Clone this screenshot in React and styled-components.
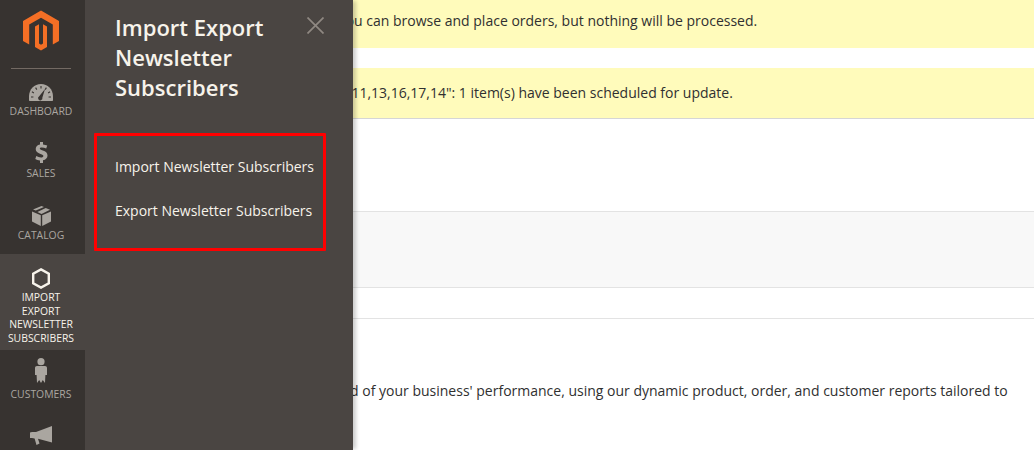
import React from 'react';
import styled, { createGlobalStyle } from 'styled-components';

const Global = createGlobalStyle`
  html, body { margin: 0; padding: 0; height: 450px; overflow: hidden; background: #fff; }
  body { font-family: "Open Sans", "Liberation Sans", sans-serif; color: #303030; }
  * { box-sizing: border-box; }
`;

const Page = styled.div`
  position: relative;
  width: 1034px;
  height: 450px;
  overflow: hidden;
  display: flex;
`;

const Nav = styled.nav`
  flex: 0 0 85px;
  height: 450px;
  background: #373330;
  display: flex;
  flex-direction: column;
  align-items: stretch;
  overflow: hidden;
  position: relative;
  z-index: 3;
`;

const LogoWrap = styled.div`
  flex: 0 0 69px;
  margin: 0 14px 0 11px;
  border-bottom: 1px solid #736a63;
  display: flex;
  justify-content: center;
  padding: 10px 1px 0 0;
`;

const NavItem = styled.div`
  flex: 0 0 auto;
  height: ${p => p.$h}px;
  background: ${p => (p.$active ? '#4a4542' : 'transparent')};
  color: ${p => (p.$active ? '#f7f3eb' : '#aaa6a0')};
  display: flex;
  flex-direction: column;
  align-items: center;
  justify-content: flex-start;
  padding: ${p => p.$pt}px 3px 0 0;
  text-align: center;
`;

const IconBox = styled.div`
  height: ${p => p.$h || 26}px;
  display: flex;
  align-items: center;
  justify-content: center;
`;

const NavLabel = styled.span`
  font-size: 10.4px;
  line-height: 13.5px;
  text-transform: uppercase;
  display: block;
`;

const Panel = styled.aside`
  position: absolute;
  left: 85px;
  top: 0;
  width: 268px;
  height: 450px;
  background: #4a4542;
  box-shadow: 4px 0 4px -1px rgba(0, 0, 0, 0.2);
  z-index: 2;
`;

const PanelTitle = styled.h2`
  margin: 0;
  padding: 12px 0 0 30px;
  width: 200px;
  font-size: 22px;
  line-height: 30px;
  font-weight: 600;
  color: #f7f3eb;
`;

const Close = styled.button`
  position: absolute;
  left: 222px;
  top: 17px;
  width: 17px;
  height: 17px;
  padding: 0;
  border: 0;
  background: none;
  display: flex;
`;

const Highlight = styled.ul`
  list-style: none;
  margin: 31px 0 0 9px;
  padding: 9px 0 0 20px;
  width: 232px;
  height: 118px;
  border: 3px solid #f00;
  border-radius: 1px;
`;

const PanelLink = styled.li`
  font-size: 14px;
  line-height: 44px;
  height: 44px;
  color: #f7f3eb;
  white-space: nowrap;
  margin-left: -2px;
`;

const Main = styled.main`
  flex: 1 1 auto;
  min-width: 0;
  display: flex;
  flex-direction: column;
  font-size: 14px;
`;

const Message = styled.div`
  height: ${p => p.$h}px;
  background: #fffbbb;
  padding-left: ${p => p.$indent}px;
  line-height: ${p => p.$lh}px;
  white-space: nowrap;
  flex: 0 0 auto;
  margin-bottom: ${p => p.$mb || 0}px;
  border-bottom: ${p => (p.$line ? '1px solid #d6d6d6' : '0')};
`;

const Spacer = styled.div`
  flex: 0 0 ${p => p.$h}px;
`;

const GreySection = styled.div`
  flex: 0 0 77px;
  background: #f8f8f8;
  border-top: 1px solid #e3e3e3;
  border-bottom: 1px solid #e3e3e3;
`;

const Rule = styled.div`
  flex: 0 0 1px;
  background: #e3e3e3;
`;

const Copy = styled.p`
  margin: 62px 0 0 0;
  padding-left: 29px;
  line-height: 20px;
  white-space: nowrap;
`;

const Logo = () => (
  <svg width="36" height="41" viewBox="0 0 36 41">
    <path fill="#f46f25" d="M18 0.500 36 11V31L29.800 34.500V14.500L18 7.800 6.200 14.500V34.500L0 31V11Z" />
    <path fill="#f46f25" d="M12 16.500 16 14.200V33.500L18 34.800 20 33.500V14.200L24 16.500V37L18 40.500 12 37Z" />
  </svg>
);

const Gauge = () => (
  <svg width="24" height="17" viewBox="0 0 24 17">
    <path fill="#aaa6a0" fillRule="evenodd" d="M12 0C5.4 0 0 5.4 0 12.2V16c0 .6.4 1 1 1h22c.6 0 1-.4 1-1v-3.800C24 5.400 18.600 0 12 0Z" />
    <path stroke="#373330" strokeWidth="1.100" d="M12 2v2.400M6.600 3.600l1.200 2M2.900 7.800l2 1.100M2 13h2.400M21.100 7.800l-2 1.100M22 13h-2.400M17.400 3.600l-1.200 2" />
    <path fill="#373330" d="M16 5 13.400 13.600a2.200 2.200 0 1 1-3.200-1.400Z" />
  </svg>
);

const Dollar = () => (
  <svg width="13" height="21" viewBox="0 0 13 21">
    <path fill="#aaa6a0" d="M5 0h3v2.400c1.700.2 3 .6 4.200 1.200l-1 2.900C9.800 5.800 8.300 5.400 6.800 5.400c-1.400 0-2 .5-2 1.200 0 .8.900 1.200 3 2 2.900 1 4.700 2.300 4.700 4.900 0 2.400-1.700 4.300-4.500 4.800V21H5v-2.500c-1.800-.2-3.500-.7-4.700-1.400l1-3c1.400.8 3.100 1.400 4.700 1.400 1.500 0 2.400-.6 2.400-1.500s-.8-1.400-2.900-2.100C2.600 10.900.7 9.600.7 7c0-2.300 1.600-4 4.300-4.500Z" />
  </svg>
);

const Box = () => (
  <svg width="19" height="20" viewBox="0 0 19 20">
    <path fill="#aaa6a0" d="M0 5.500 8.800 9.300V20L0 15.600ZM19 5.500 10.200 9.300V20L19 15.600Z" />
    <path fill="#aaa6a0" d="M9.500 0 12 1.100 3.800 4.500 1 3.400ZM13.700 1.900 18 3.700 9.500 7.900 5.400 6Z" />
  </svg>
);

const Hexagon = () => (
  <svg width="18" height="21" viewBox="0 0 18 21">
    <path fill="none" stroke="#f7f3eb" strokeWidth="2.400" d="M9 1.400 16.800 5.800V15.200L9 19.600 1.200 15.200V5.800Z" />
  </svg>
);

const Person = () => (
  <svg width="12" height="25" viewBox="0 0 12 25">
    <circle cx="6" cy="3.700" r="3.600" fill="#aaa6a0" />
    <path fill="#aaa6a0" d="M2 8h8c1.200 0 2 .8 2 2v7h-1.600L10 25l-2.200-3L6 25l-1.800-3L2 25l-.4-8H0v-7c0-1.200.8-2 2-2Z" />
  </svg>
);

const Megaphone = () => (
  <svg width="22" height="20" viewBox="0 0 22 20">
    <path fill="#aaa6a0" d="M22 0V16.500L8 12.800 9.500 17.500 6.500 19 4.600 12.400 2 12H0V6.500L2 6H6Z" />
  </svg>
);

const X = () => (
  <svg width="17" height="17" viewBox="0 0 17 17">
    <path stroke="#8f8882" strokeWidth="1.700" fill="none" d="M.5.500 16.500 16.500M16.500.5.500 16.500" />
  </svg>
);

export default function App() {
  return (
    <Page>
      <Global />
      <Nav>
        <LogoWrap><Logo /></LogoWrap>
        <NavItem $h={61} $pt={10}>
          <IconBox><Gauge /></IconBox>
          <NavLabel>Dashboard</NavLabel>
        </NavItem>
        <NavItem $h={62} $pt={7}>
          <IconBox $h={30}><Dollar /></IconBox>
          <NavLabel>Sales</NavLabel>
        </NavItem>
        <NavItem $h={62} $pt={11}>
          <IconBox><Box /></IconBox>
          <NavLabel>Catalog</NavLabel>
        </NavItem>
        <NavItem $active $h={96} $pt={11}>
          <IconBox><Hexagon /></IconBox>
          <NavLabel>Import<br />Export<br />Newsletter<br />Subscribers</NavLabel>
        </NavItem>
        <NavItem $h={62} $pt={2}>
          <IconBox $h={36}><Person /></IconBox>
          <NavLabel>Customers</NavLabel>
        </NavItem>
        <NavItem $h={38} $pt={11}>
          <IconBox><Megaphone /></IconBox>
        </NavItem>
      </Nav>
      <Panel>
        <PanelTitle>Import Export Newsletter Subscribers</PanelTitle>
        <Close aria-label="Close"><X /></Close>
        <Highlight>
          <PanelLink>Import Newsletter Subscribers</PanelLink>
          <PanelLink>Export Newsletter Subscribers</PanelLink>
        </Highlight>
      </Panel>
      <Main>
        <Message $h={48} $mb={20} $lh={41} $indent={115}>This is a demo store. You can browse and place orders, but nothing will be processed.</Message>
        <Message $h={51} $line $lh={49} $indent={28}>Updating product attributes for IDs "11,13,16,17,14": 1 item(s) have been scheduled for update.</Message>
        <Spacer $h={92} />
        <GreySection />
        <Spacer $h={30} />
        <Rule />
        <Copy>Gain new insights and take command of your business' performance, using our dynamic product, order, and customer reports tailored to</Copy>
      </Main>
    </Page>
  );
}
